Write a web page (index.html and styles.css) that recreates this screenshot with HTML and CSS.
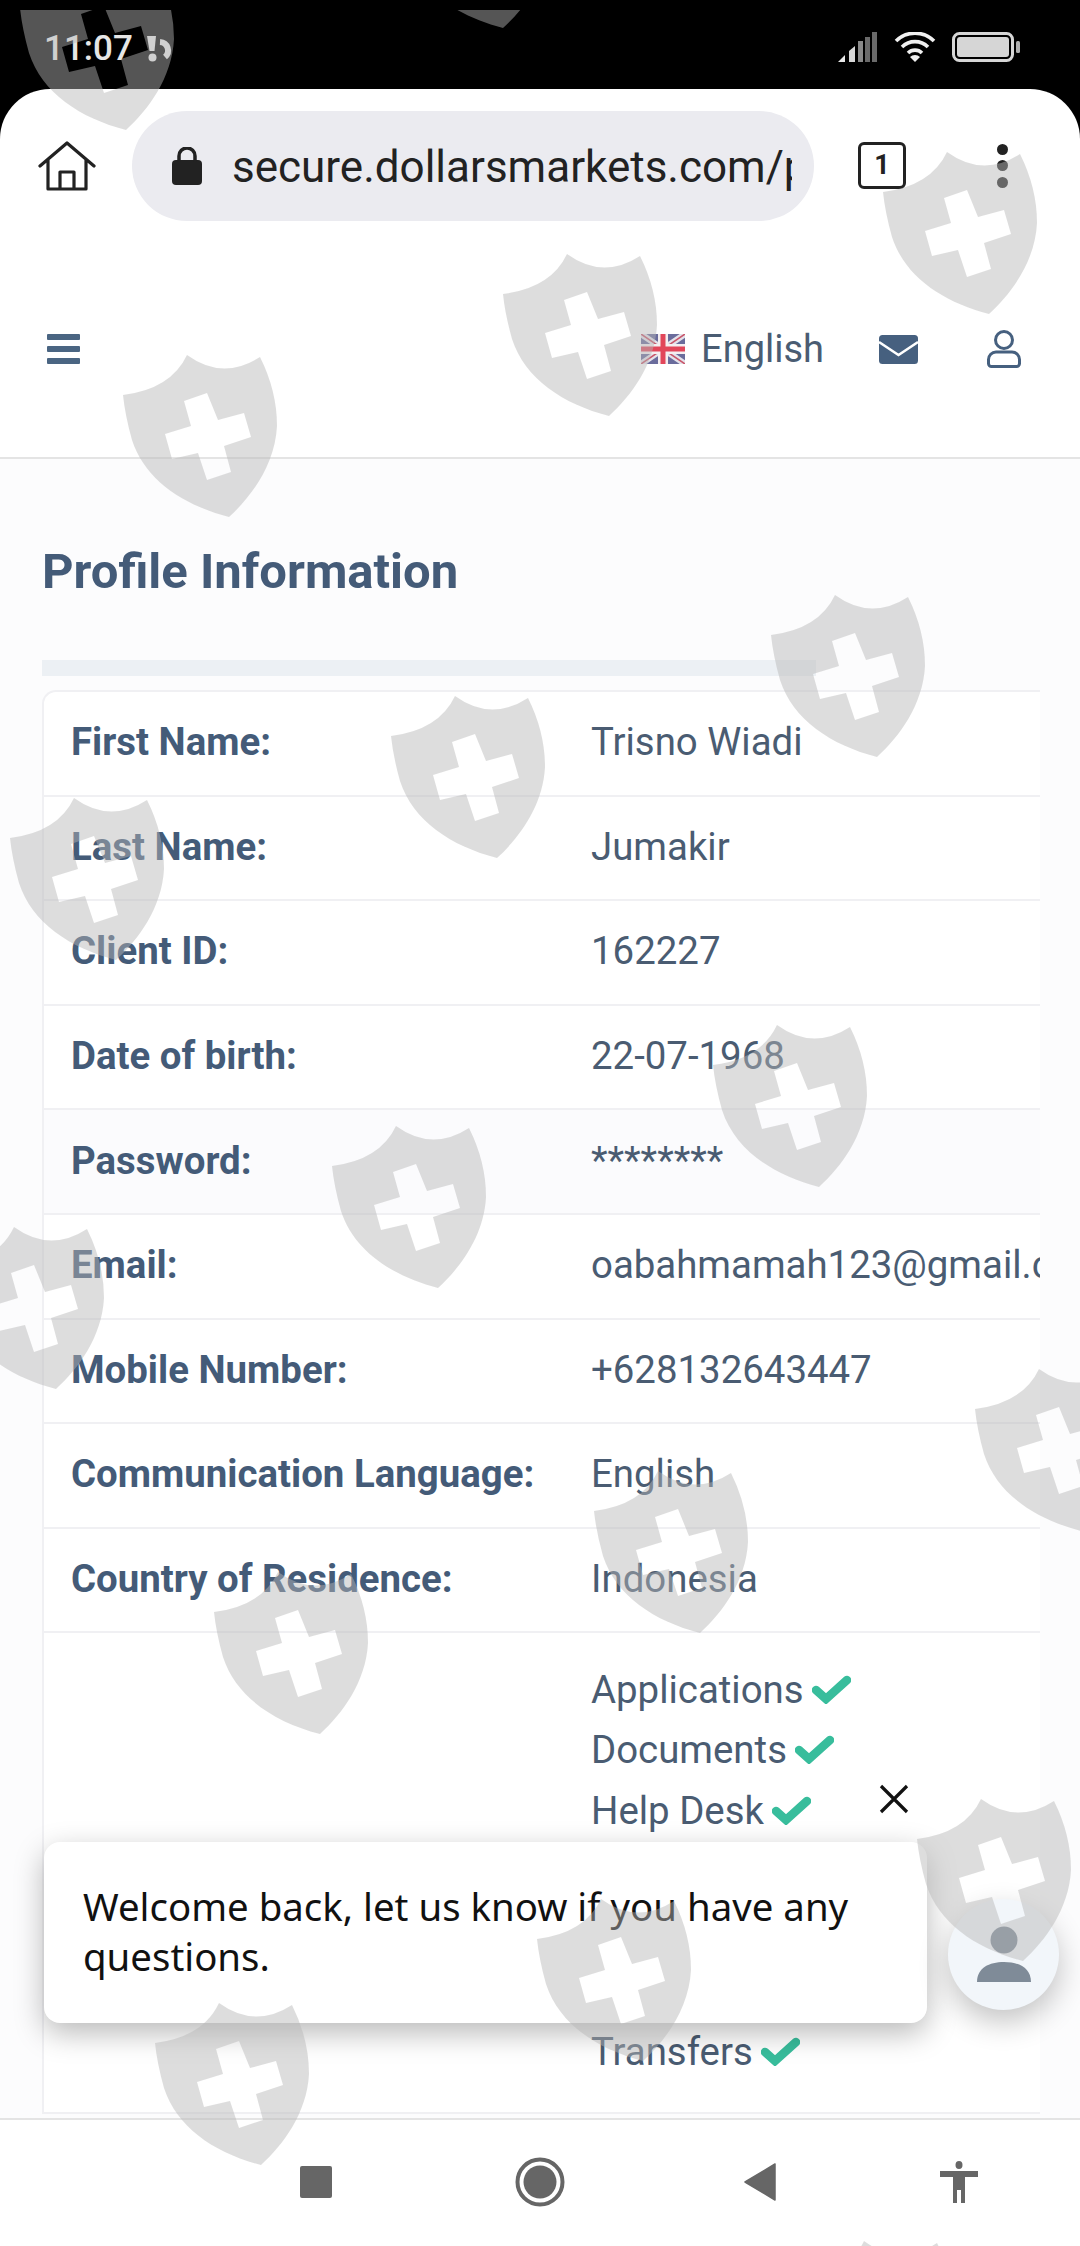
FILE: index.html
```html
<!doctype html>
<html lang="en">

<head>
	<meta charset="UTF-8">
	<meta name="viewport" content="width=device-width, initial-scale=1.0" />
	<title>Profile Information</title>
	<link rel="stylesheet" href="styles.css">
</head>

<body>
	<div class="status-bar">
		<div class="status-left">
			<span class="clock">11:07</span>
			<svg class="status-alert" width="28" height="28" viewBox="0 0 28 28">
				<path d="M1 1h9l-1.5 15h-5z" fill="#e6e6e6" />
				<circle cx="6.5" cy="22.5" r="4" fill="#e6e6e6" />
				<path d="M14 7a8.5 8.5 0 0 1 5 15" fill="none" stroke="#e6e6e6" stroke-width="6" />
			</svg>
		</div>
		<div class="status-right">
			<svg width="40" height="30" viewBox="0 0 40 30">
				<path d="M0 30l7-7v7z" fill="#e8e8e8" />
				<path d="M11 19l6-5v16h-6z" fill="#d8d8d8" />
				<rect x="20" y="9" width="5" height="21" fill="#8a8a8a" />
				<rect x="27" y="5" width="5" height="25" fill="#6a6a6a" />
				<rect x="34" y="0" width="5" height="30" fill="#6a6a6a" />
			</svg>
			<svg width="42" height="30" viewBox="0 0 42 30">
				<path d="M2 9a27 27 0 0 1 38 0M8 15a18.5 18.5 0 0 1 26 0M14 21a10 10 0 0 1 14 0" fill="none" stroke="#f0f0f0" stroke-width="3.6" />
				<path d="M21 30l-5-5a7 7 0 0 1 10 0z" fill="#f0f0f0" />
			</svg>
			<svg width="70" height="30" viewBox="0 0 70 30">
				<rect x="1.5" y="1.5" width="59" height="27" rx="6" fill="none" stroke="#d6d6d6" stroke-width="3" />
				<rect x="5" y="5" width="52" height="20" rx="3" fill="#d6d6d6" />
				<rect x="64" y="9" width="4" height="12" rx="1.5" fill="#b0b0b0" />
			</svg>
		</div>
	</div>

	<div class="browser">
		<div class="toolbar">
			<svg class="home-icon" width="58" height="50" viewBox="0 0 58 50">
				<path d="M2 25L29 2l27 23M10 19v29h38V19M22 48V31h14v17" fill="none" stroke="#222" stroke-width="3.2" stroke-linejoin="round" stroke-linecap="round" />
			</svg>
			<div class="url-pill">
				<svg width="30" height="38" viewBox="0 0 30 38">
					<rect x="0" y="13" width="30" height="25" rx="4" fill="#222" />
					<path d="M7 15V9a8 8 0 0 1 16 0v6" fill="none" stroke="#222" stroke-width="3.5" />
				</svg>
				<div class="url-text">secure.dollarsmarkets.com/profile</div>
			</div>
			<div class="tab-count">1</div>
			<div class="menu-dots"><span></span><span></span><span></span></div>
		</div>

		<header class="site-header">
			<div class="burger"><span></span><span></span><span></span></div>
			<div class="header-right">
				<svg class="flag" width="44" height="30" viewBox="0 0 44 30">
					<rect width="44" height="30" fill="#6a6c9c" />
					<path d="M0 0l44 30M44 0L0 30" stroke="#e4e2ea" stroke-width="6" />
					<path d="M0 0l44 30M44 0L0 30" stroke="#c9566a" stroke-width="1.5" />
					<path d="M22 0v30M0 15h44" stroke="#f4eef0" stroke-width="10" />
					<path d="M22 0v30M0 15h44" stroke="#e2465a" stroke-width="5" />
				</svg>
				<span class="lang">English</span>
				<svg class="mail-icon" width="39" height="29" viewBox="0 0 39 29">
					<rect width="39" height="29" rx="3.5" fill="#46607f" />
					<path d="M0 7l19.500 13L39 7" fill="none" stroke="#fff" stroke-width="2.5" />
				</svg>
				<svg class="user-icon" width="34" height="38" viewBox="0 0 34 38">
					<circle cx="17" cy="10" r="8.5" fill="none" stroke="#46607f" stroke-width="3" />
					<path d="M9 22h16a7.5 7.5 0 0 1 7.5 7.500v4A3 3 0 0 1 29.5 36.500h-25A3 3 0 0 1 1.5 33.500v-4A7.5 7.5 0 0 1 9 22z" fill="none" stroke="#46607f" stroke-width="3" />
				</svg>
			</div>
		</header>

		<main class="content">
			<h1>Profile Information</h1>
			<div class="title-bar"></div>
			<div class="info-table">
				<div class="info-row"><div class="info-label">First Name:</div><div class="info-value">Trisno Wiadi</div></div>
				<div class="info-row"><div class="info-label">Last Name:</div><div class="info-value">Jumakir</div></div>
				<div class="info-row"><div class="info-label">Client ID:</div><div class="info-value">162227</div></div>
				<div class="info-row"><div class="info-label">Date of birth:</div><div class="info-value">22-07-1968</div></div>
				<div class="info-row tinted"><div class="info-label">Password:</div><div class="info-value">********</div></div>
				<div class="info-row"><div class="info-label">Email:</div><div class="info-value">oabahmamah123@gmail.com</div></div>
				<div class="info-row"><div class="info-label">Mobile Number:</div><div class="info-value">+628132643447</div></div>
				<div class="info-row"><div class="info-label">Communication Language:</div><div class="info-value">English</div></div>
				<div class="info-row"><div class="info-label">Country of Residence:</div><div class="info-value">Indonesia</div></div>
				<div class="info-row perms">
					<div class="info-label"></div>
					<ul class="perm-list">
						<li>Applications <svg class="check" width="39" height="29" viewBox="0 0 39 29"><use href="#check" /></svg></li>
						<li>Documents <svg class="check" width="39" height="29" viewBox="0 0 39 29"><use href="#check" /></svg></li>
						<li>Help Desk <svg class="check" width="39" height="29" viewBox="0 0 39 29"><use href="#check" /></svg></li>
						<li class="covered"></li>
						<li class="covered"></li>
						<li class="covered"></li>
						<li>Transfers <svg class="check" width="39" height="29" viewBox="0 0 39 29"><use href="#check" /></svg></li>
					</ul>
				</div>
			</div>
		</main>

		<nav class="system-nav">
			<span class="nav-square"></span>
			<svg class="nav-home" width="50" height="50" viewBox="0 0 50 50">
				<circle cx="25" cy="25" r="22.5" fill="none" stroke="#666" stroke-width="4" />
				<circle cx="25" cy="25" r="16.5" fill="#666" />
			</svg>
			<svg class="nav-back" width="32" height="38" viewBox="0 0 32 38">
				<path d="M31 1v36L1 19z" fill="#666" stroke="#666" stroke-width="1.5" stroke-linejoin="round" />
			</svg>
			<svg class="nav-access" width="38" height="42" viewBox="0 0 38 42">
				<ellipse cx="19" cy="4" rx="3.5" ry="4" fill="#666" />
				<path d="M0 10h38v6H25v26h-4V29h-4v13h-4V16H0z" fill="#666" />
			</svg>
		</nav>
	</div>

	<button class="chat-close" aria-label="Close">
		<svg width="30" height="30" viewBox="0 0 30 30">
			<path d="M2 2l26 26M28 2L2 28" stroke="#111" stroke-width="3.2" />
		</svg>
	</button>
	<div class="chat-bubble">Welcome back, let us know if you have any questions.</div>
	<div class="chat-button">
		<svg width="56" height="58" viewBox="0 0 56 58">
			<circle cx="28" cy="14" r="13.5" fill="#7f8b98" />
			<path d="M1 56c0-14 12-20 27-20s27 6 27 20z" fill="#7f8b98" />
		</svg>
	</div>

	<!-- repeated shield watermark over the whole capture -->
	<svg class="watermark" width="1080" height="2236" viewBox="0 10 1080 2236">
		<defs>
			<path id="shield" fill-rule="evenodd" d="M64 0Q100 26 137 2Q154 36 154 71C152 110 128 142 106 162C60 150 22 125 9 85Q2 60 0 40Q48 34 64 0ZM61 46L84 38L95 65L121 58L128 82L101 91L108 117L84 125L75 98L49 104L42 79L68 71Z" />
			<path id="check" d="M4 15L14 24L35 5" fill="none" stroke="#38bd9c" stroke-width="8.5" stroke-linecap="round" stroke-linejoin="miter" />
		</defs>
		<g class="shields">
			<use href="#shield" x="20" y="-32" />
			<use href="#shield" x="397" y="-134" />
			<use href="#shield" x="883" y="152" />
			<use href="#shield" x="503" y="254" />
			<use href="#shield" x="123" y="355" />
			<use href="#shield" x="771" y="595" />
			<use href="#shield" x="391" y="696" />
			<use href="#shield" x="10" y="798" />
			<use href="#shield" x="713" y="1025" />
			<use href="#shield" x="332" y="1126" />
			<use href="#shield" x="-50" y="1227" />
			<use href="#shield" x="975" y="1369" />
			<use href="#shield" x="594" y="1471" />
			<use href="#shield" x="214" y="1572" />
			<use href="#shield" x="917" y="1799" />
			<use href="#shield" x="537" y="1899" />
			<use href="#shield" x="155" y="2003" />
			<use href="#shield" x="800" y="2241" />
		</g>
	</svg>
</body>

</html>
```

FILE: styles.css
```css
:root {
	--slate: #445b78;
	--value-color: #4a5c72;
	--row-line: #f0f0f3;
	--ink: #222222;
}

* {
	box-sizing: border-box;
	margin: 0;
	padding: 0;
}

body {
	position: relative;
	width: 1080px;
	height: 2246px;
	overflow: hidden;
	display: flex;
	flex-direction: column;
	background: #000000;
	font-family: Roboto, "Liberation Sans", sans-serif;
}

/* phone status bar */
.status-bar {
	flex: none;
	height: 89px;
	display: flex;
	justify-content: space-between;
	align-items: flex-start;
	padding: 33px 58px 0 44px;
}

.status-left {
	display: flex;
	align-items: center;
	gap: 13px;
}

.clock {
	color: #e6e6e6;
	font-size: 35px;
	line-height: 32px;
	font-weight: 500;
}

.status-alert {
	display: block;
}

.status-right {
	display: flex;
	gap: 16px;
	margin-top: -1px;
}

/* white browser sheet */
.browser {
	flex: 1;
	min-height: 0;
	display: flex;
	flex-direction: column;
	background: #ffffff;
	border-radius: 50px 50px 0 0;
}

.toolbar {
	flex: none;
	height: 162px;
	display: flex;
	align-items: center;
	padding: 0 0 9px 38px;
}

.home-icon {
	flex: none;
}

.url-pill {
	flex: none;
	width: 682px;
	height: 110px;
	margin-left: 36px;
	padding: 0 22px 0 40px;
	display: flex;
	align-items: center;
	gap: 30px;
	background: #ebebf0;
	border-radius: 55px;
}

.url-text {
	flex: 1;
	min-width: 0;
	overflow: hidden;
	white-space: nowrap;
	padding-top: 3px;
	color: var(--ink);
	font-size: 44px;
	line-height: 60px;
}

.tab-count {
	flex: none;
	width: 48px;
	height: 47px;
	margin-left: 44px;
	border: 3px solid var(--ink);
	border-radius: 6px;
	color: var(--ink);
	font-size: 27px;
	font-weight: 700;
	line-height: 41px;
	text-align: center;
}

.menu-dots {
	flex: none;
	margin-left: 91px;
	display: flex;
	flex-direction: column;
	gap: 5.5px;
}

.menu-dots span {
	width: 11px;
	height: 11px;
	border-radius: 50%;
	background: var(--ink);
}

/* site header */
.site-header {
	flex: none;
	height: 208px;
	display: flex;
	justify-content: space-between;
	align-items: center;
	padding: 0 59px 10px 47px;
	border-bottom: 2px solid #e4e4e4;
}

.burger {
	display: flex;
	flex-direction: column;
	gap: 6px;
}

.burger span {
	width: 33px;
	height: 6px;
	border-radius: 1px;
	background: #4a6582;
}

.header-right {
	display: flex;
	align-items: center;
}

.lang {
	margin-left: 16px;
	color: var(--value-color);
	font-size: 38px;
	line-height: 44px;
}

.mail-icon {
	margin-left: 55px;
}

.user-icon {
	margin-left: 69px;
}

/* profile content */
.content {
	flex: 1;
	min-height: 0;
	overflow: hidden;
	padding: 0 40px 0 42px;
	background: #fcfcfd;
}

h1 {
	height: 201px;
	padding-top: 86px;
	color: var(--slate);
	font-size: 49px;
	line-height: 54px;
	font-weight: 700;
}

.title-bar {
	width: 774px;
	height: 16px;
	background: #ecf0f4;
}

.info-table {
	margin-top: 14px;
	background: #ffffff;
	border-top: 2px solid var(--row-line);
	border-left: 2px solid var(--row-line);
	border-radius: 14px 0 0 0;
	overflow: hidden;
}

.info-row {
	height: 104.6px;
	display: flex;
	align-items: center;
	padding-bottom: 3px;
	border-bottom: 2px solid var(--row-line);
	font-size: 38.4px;
}

.info-row.tinted {
	background: #fbfbfd;
}

.info-row.perms {
	height: 481px;
	align-items: flex-start;
	padding: 26px 0 0;
}

.info-label {
	flex: none;
	width: 547px;
	padding-left: 27px;
	color: var(--slate);
	font-weight: 700;
	white-space: nowrap;
}

.info-value {
	white-space: nowrap;
	color: var(--value-color);
}

.perm-list {
	list-style: none;
	color: var(--value-color);
}

.perm-list li {
	height: 60.3px;
	display: flex;
	align-items: center;
	gap: 8px;
}

.check {
	display: block;
}

/* android nav */
.system-nav {
	flex: none;
	height: 128px;
	display: flex;
	align-items: center;
	padding: 0 0 2px 300px;
	background: #ffffff;
	border-top: 2px solid #e4e4e4;
}

.nav-square {
	width: 32px;
	height: 32px;
	border-radius: 2px;
	background: #666666;
}

.nav-home {
	margin-left: 183px;
}

.nav-back {
	margin-left: 179px;
}

.nav-access {
	margin-left: 164px;
}

/* chat widget, floats above the page */
.chat-close {
	position: absolute;
	left: 879px;
	top: 1784px;
	width: 30px;
	height: 30px;
	border: 0;
	background: none;
}

.chat-bubble {
	position: absolute;
	left: 44px;
	top: 1842px;
	width: 883px;
	height: 181px;
	padding: 39px;
	background: #ffffff;
	border-radius: 16px;
	box-shadow: 0 10px 30px rgba(0, 0, 0, 0.28);
	color: #111111;
	font-family: "Noto Sans", "Open Sans", sans-serif;
	font-size: 38.4px;
	line-height: 50px;
}

.chat-button {
	position: absolute;
	left: 948px;
	top: 1899px;
	width: 111px;
	height: 111px;
	display: flex;
	align-items: center;
	justify-content: center;
	border-radius: 50%;
	background: #f2f6fa;
	box-shadow: 0 12px 30px rgba(0, 0, 0, 0.24);
}

.watermark {
	position: absolute;
	left: 0;
	top: 10px;
	pointer-events: none;
}

.shields {
	fill: rgba(182, 182, 182, 0.467);
}
```
